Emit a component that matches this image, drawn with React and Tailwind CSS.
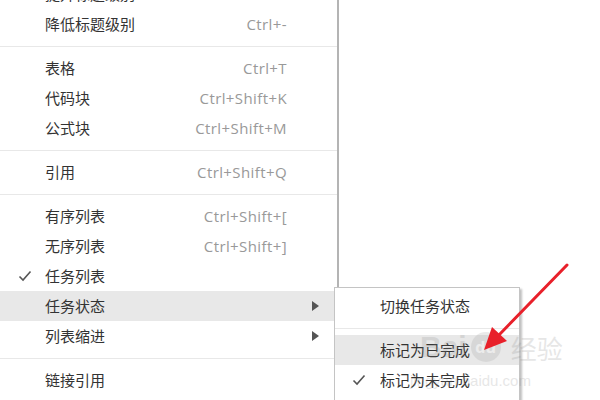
import React from "react";

const Check = () => (
  <svg width="14" height="12" viewBox="0 0 14 12" className="block">
    <polyline points="1.5,6.5 5,10 12.5,1.5" fill="none" stroke="#555" strokeWidth="1.6" />
  </svg>
);

const Tri = () => (
  <svg width="7" height="10" viewBox="0 0 7 10" className="block">
    <polygon points="0,0 7,5 0,10" fill="#555" />
  </svg>
);

function Item({ label, shortcut, checked, active, sub }) {
  return (
    <div className={`flex h-[30px] items-center ${active ? "bg-[#e8e8e8]" : ""}`}>
      <div className="flex w-[45px] shrink-0 justify-center pl-[4px]">{checked ? <Check /> : null}</div>
      <div className="flex-1 text-[15px] text-[#333]">{label}</div>
      {shortcut ? (
        <div className="mr-[50px] text-[15px] tracking-[0.4px] text-[#999]">{shortcut}</div>
      ) : null}
      {sub ? (
        <div className="mr-[18px]">
          <Tri />
        </div>
      ) : null}
    </div>
  );
}

const Sep = () => (
  <div className="flex h-[14px] items-center">
    <div className="h-px w-full bg-[#e8e8e8]" />
  </div>
);

export default function App() {
  return (
    <div
      className="relative h-[400px] w-[600px] overflow-hidden bg-white"
      style={{ fontFamily: '"Open Sans", "Noto Sans CJK SC", sans-serif' }}
    >
      <div className="mt-[-21px] w-[339px] border-r-2 border-[#b4b4b4] bg-white">
        <Item label="提升标题级别" shortcut="Ctrl+=" />
        <Item label="降低标题级别" shortcut="Ctrl+-" />
        <Sep />
        <Item label="表格" shortcut="Ctrl+T" />
        <Item label="代码块" shortcut="Ctrl+Shift+K" />
        <Item label="公式块" shortcut="Ctrl+Shift+M" />
        <Sep />
        <Item label="引用" shortcut="Ctrl+Shift+Q" />
        <Sep />
        <Item label="有序列表" shortcut="Ctrl+Shift+[" />
        <Item label="无序列表" shortcut="Ctrl+Shift+]" />
        <Item label="任务列表" checked />
        <Item label="任务状态" active sub />
        <Item label="列表缩进" sub />
        <Sep />
        <Item label="链接引用" />
        <div className="h-[30px]" />
      </div>

      {/* Submenu */}
      <div className="absolute left-[334px] top-[287px] w-[186px] border border-[#c4c4c4] bg-white pt-[3px] shadow-[2px_2px_2px_rgba(0,0,0,0.25)]">
        <div className="flex h-[30px] items-center">
          <div className="w-[45px] shrink-0" />
          <div className="text-[15px] text-[#333]">切换任务状态</div>
        </div>
        <div className="flex h-[14px] items-center">
          <div className="h-px w-full bg-[#e8e8e8]" />
        </div>
        <div className="flex h-[30px] items-center bg-[#e8e8e8]">
          <div className="w-[45px] shrink-0" />
          <div className="text-[15px] text-[#333]">标记为已完成</div>
        </div>
        <div className="flex h-[30px] items-center">
          <div className="flex w-[45px] shrink-0 justify-center pl-[2px]">
            <Check />
          </div>
          <div className="text-[15px] text-[#333]">标记为未完成</div>
        </div>
        <div className="h-[20px]" />
      </div>

      {/* Watermark */}
      <div className="pointer-events-none absolute left-[420px] top-[332px] flex items-end gap-[4px] opacity-20">
        <span className="text-[30px] font-bold leading-none text-[#888]" style={{ fontFamily: '"Liberation Sans", sans-serif' }}>Bai</span>
        <span className="flex h-[30px] w-[30px] items-center justify-center rounded-full bg-[#999] text-[16px] font-bold leading-none text-white">du</span>
        <span className="ml-[6px] text-[26px] leading-none text-[#888]">经验</span>
      </div>
      <div className="pointer-events-none absolute left-[410px] top-[370px] text-[15px] text-[#888] opacity-20" style={{ fontFamily: '"Liberation Sans", sans-serif' }}>
        jingyan.baidu.com
      </div>

      {/* Red arrow */}
      <svg className="absolute left-0 top-0" width="600" height="400" viewBox="0 0 600 400">
        <line x1="567" y1="265" x2="498" y2="336" stroke="#e8202a" strokeWidth="3" strokeLinecap="round" />
        <polygon points="484,350 492,327 507,341" fill="#e8202a" />
      </svg>
    </div>
  );
}
